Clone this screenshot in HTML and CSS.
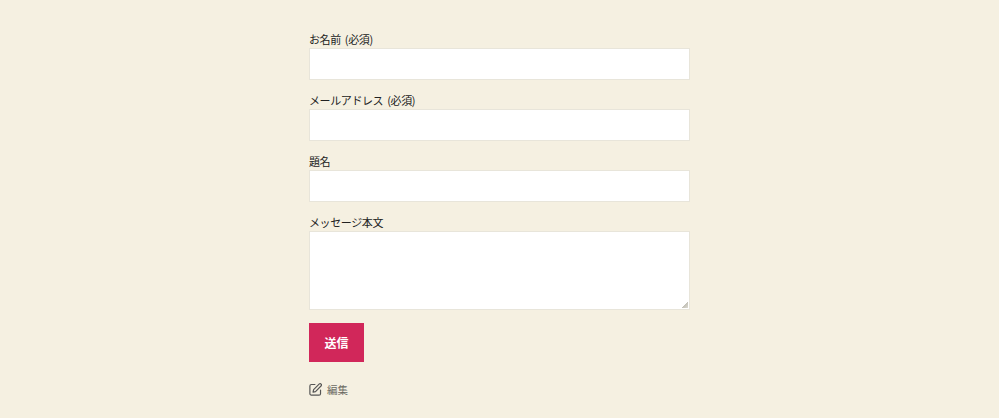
FILE: index.html
```html
<!DOCTYPE html>
<html lang="ja">
<head>
<meta charset="utf-8">
<title>お問い合わせ</title>
<link rel="stylesheet" href="styles.css">
</head>
<body>
<main class="page">
  <form class="form">
    <label class="field">
      <span class="label">お名前 (必須)</span>
      <input class="input" type="text">
    </label>
    <label class="field">
      <span class="label">メールアドレス (必須)</span>
      <input class="input" type="email">
    </label>
    <label class="field">
      <span class="label">題名</span>
      <input class="input" type="text">
    </label>
    <label class="field">
      <span class="label">メッセージ本文</span>
      <textarea class="input textarea"></textarea>
    </label>
    <button class="submit" type="button">送信</button>
  </form>
  <a class="edit" href="#">
    <svg class="edit-icon" viewBox="1 1 22 22" width="13" height="13" aria-hidden="true">
      <path d="M11 3.500H5a2.500 2.500 0 0 0-2.500 2.500v13A2.500 2.500 0 0 0 5 21.500h13a2.500 2.500 0 0 0 2.500-2.500v-6"/>
      <path d="M18.500 2.500a2.300 2.300 0 0 1 3.200 3.200L12 15.500l-4.200 1 1-4.200z"/>
    </svg>
    <span>編集</span>
  </a>
</main>
</body>
</html>
```
FILE: styles.css
```css
* { box-sizing: border-box; }
html, body { margin: 0; height: 100%; }
body {
  background: #f5f0e1;
  color: #222;
  font-family: "Noto Sans CJK JP", "Liberation Sans", sans-serif;
  font-size: 11px;
  overflow: hidden;
}
.page {
  width: 382px;
  margin: 0 0 0 309px;
  padding-top: 31px;
}
.form { display: flex; flex-direction: column; }
.field { display: block; margin-bottom: 12px; }
.label {
  display: block;
  height: 17px;
  line-height: 16px;
  letter-spacing: -0.4px;
  word-spacing: 2px;
  white-space: nowrap;
}
.input {
  display: block;
  width: 381px;
  height: 32px;
  padding: 0 8px;
  margin: 0;
  background: #fff;
  border: 1px solid #e8e5da;
  border-radius: 0;
  outline: 0;
  font: inherit;
}
.textarea { height: 79px; resize: vertical; }
.textarea::-webkit-resizer {
  background: linear-gradient(135deg, transparent 50%, #c4c2b9 50%, #dcdad1 100%) right 1px bottom 1px / 6px 6px no-repeat;
}
.submit {
  width: 55px;
  height: 39px;
  margin-top: 1px;
  padding: 0;
  border: 0;
  background: #d1275a;
  color: #fff;
  font: 700 12px "Noto Sans CJK JP", sans-serif;
}
.edit {
  display: flex;
  align-items: center;
  gap: 5px;
  margin-top: 19px;
  height: 16px;
  color: #6b6b63;
  font-size: 10.5px;
  text-decoration: none;
}
.edit-icon {
  fill: none;
  stroke: #555;
  stroke-width: 2;
  stroke-linecap: round;
  stroke-linejoin: round;
}
```
